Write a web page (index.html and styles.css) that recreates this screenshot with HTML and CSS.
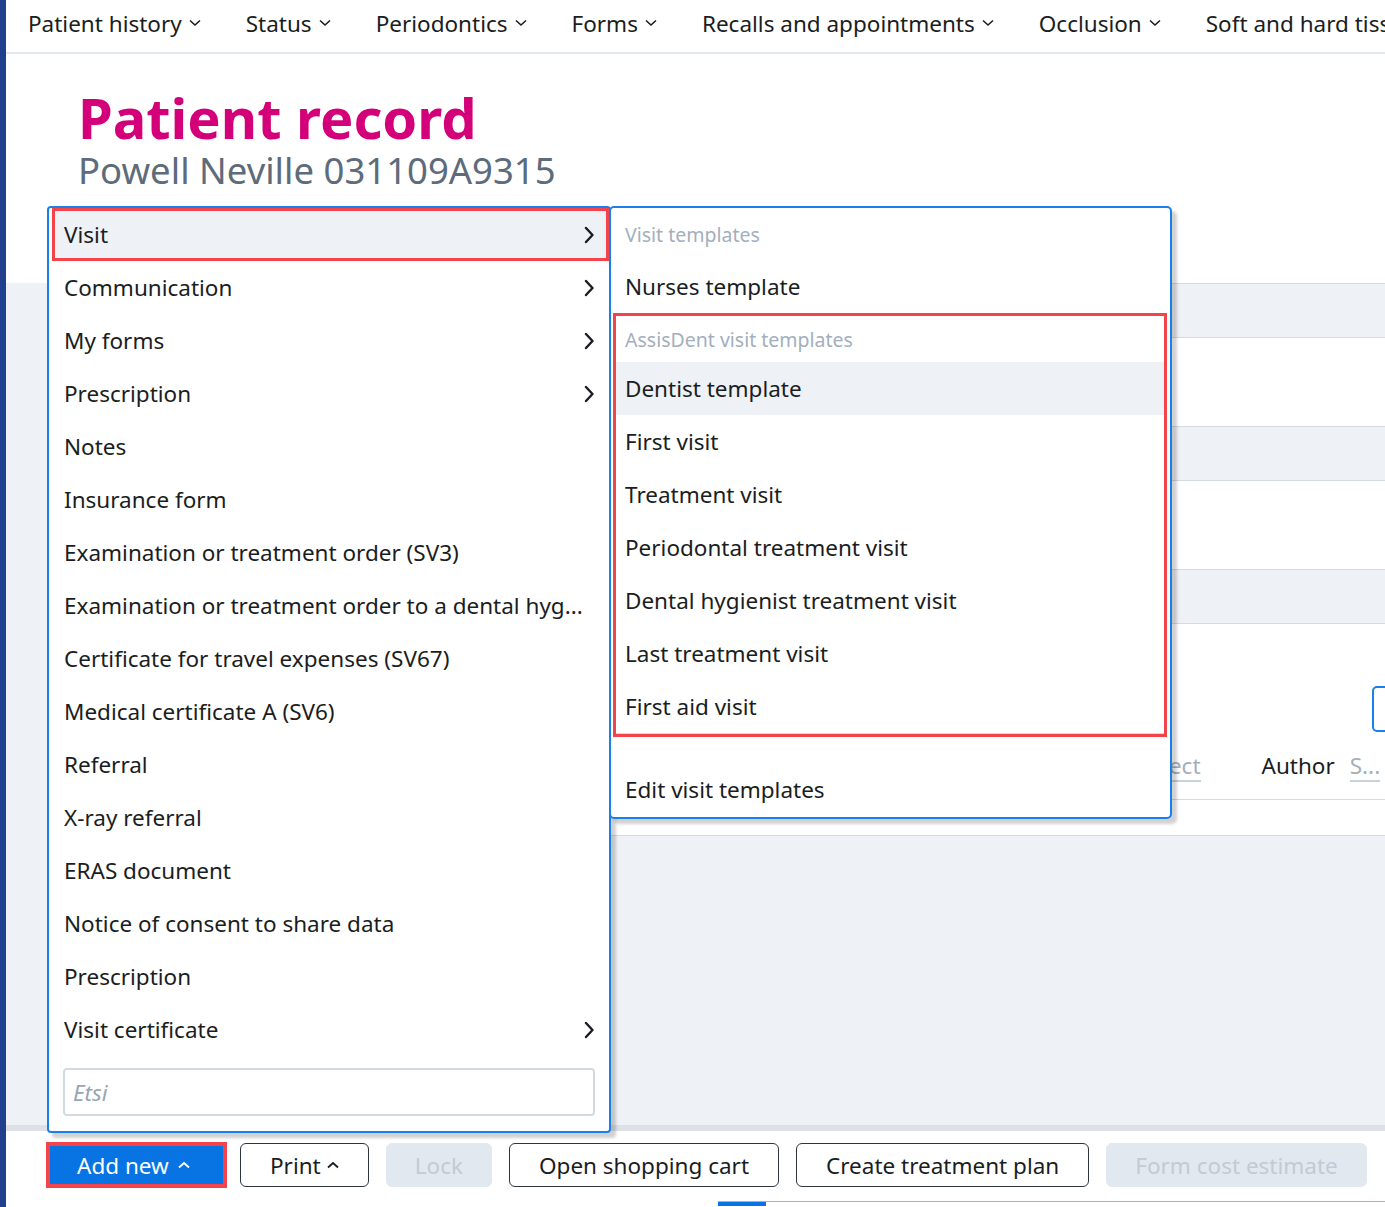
FILE: index.html
```html
<!DOCTYPE html>
<html lang="en">

<head>
    <meta charset="UTF-8">
    <title>Patient record</title>
    <link rel="stylesheet" href="styles.css">
</head>

<body>
    <div class="app">
        <div class="strip"></div>
        <div class="main">
            <nav class="topnav">
                <span class="nav-item">Patient history <svg class="chev" viewBox="0 0 12 8"><polyline points="1,1.5 6,6 11,1.5"/></svg></span>
                <span class="nav-item">Status <svg class="chev" viewBox="0 0 12 8"><polyline points="1,1.5 6,6 11,1.5"/></svg></span>
                <span class="nav-item">Periodontics <svg class="chev" viewBox="0 0 12 8"><polyline points="1,1.5 6,6 11,1.5"/></svg></span>
                <span class="nav-item">Forms <svg class="chev" viewBox="0 0 12 8"><polyline points="1,1.5 6,6 11,1.5"/></svg></span>
                <span class="nav-item">Recalls and appointments <svg class="chev" viewBox="0 0 12 8"><polyline points="1,1.5 6,6 11,1.5"/></svg></span>
                <span class="nav-item">Occlusion <svg class="chev" viewBox="0 0 12 8"><polyline points="1,1.5 6,6 11,1.5"/></svg></span>
                <span class="nav-item">Soft and hard tissues <svg class="chev" viewBox="0 0 12 8"><polyline points="1,1.5 6,6 11,1.5"/></svg></span>
            </nav>

            <header class="header">
                <h1 class="title">Patient record</h1>
                <p class="subtitle">Powell Neville 031109A9315</p>
            </header>

            <section class="panel">
                <div class="card">
                    <div class="row shade r1"></div>
                    <div class="row r2"></div>
                    <div class="row shade r3"></div>
                    <div class="row r4"></div>
                    <div class="row shade r5"></div>
                    <div class="row toolbar">
                        <div class="tool-btn"></div>
                        <div class="filters">
                            <span class="filter-link">Subject</span>
                            <span class="filter-label">Author</span>
                            <span class="filter-link">S...</span>
                        </div>
                    </div>
                    <div class="row r7"></div>
                </div>
            </section>

            <footer class="footer">
                <div class="actions">
                    <span class="marked-btn"><button class="btn primary">Add new <svg class="caret" viewBox="0 0 12 8"><polyline points="1,6.5 6,2 11,6.5"/></svg></button></span>
                    <button class="btn outline">Print <svg class="caret" viewBox="0 0 12 8"><polyline points="1,6.5 6,2 11,6.5"/></svg></button>
                    <button class="btn disabled">Lock</button>
                    <button class="btn outline">Open shopping cart</button>
                    <button class="btn outline">Create treatment plan</button>
                    <button class="btn disabled">Form cost estimate</button>
                </div>
                <div class="scrollbar"><span class="thumb"></span></div>
            </footer>

            <!-- dropdown opened from "Add new" -->
            <div class="menu main-menu">
                <div class="item marked active">Visit <svg class="arrow" viewBox="0 0 10 18"><polyline points="2,2 8.5,9 2,16"/></svg></div>
                <div class="item">Communication <svg class="arrow" viewBox="0 0 10 18"><polyline points="2,2 8.5,9 2,16"/></svg></div>
                <div class="item">My forms <svg class="arrow" viewBox="0 0 10 18"><polyline points="2,2 8.5,9 2,16"/></svg></div>
                <div class="item">Prescription <svg class="arrow" viewBox="0 0 10 18"><polyline points="2,2 8.5,9 2,16"/></svg></div>
                <div class="item">Notes</div>
                <div class="item">Insurance form</div>
                <div class="item">Examination or treatment order (SV3)</div>
                <div class="item"><span class="clip">Examination or treatment order to a dental hyg...</span></div>
                <div class="item">Certificate for travel expenses (SV67)</div>
                <div class="item">Medical certificate A (SV6)</div>
                <div class="item">Referral</div>
                <div class="item">X-ray referral</div>
                <div class="item">ERAS document</div>
                <div class="item">Notice of consent to share data</div>
                <div class="item">Prescription</div>
                <div class="item">Visit certificate <svg class="arrow" viewBox="0 0 10 18"><polyline points="2,2 8.5,9 2,16"/></svg></div>
                <div class="search-wrap">
                    <input class="search" type="text" placeholder="Etsi">
                </div>
            </div>

            <div class="menu sub-menu">
                <div class="item group-label first">Visit templates</div>
                <div class="item">Nurses template</div>
                <div class="group marked-group">
                    <div class="item group-label">AssisDent visit templates</div>
                    <div class="item active">Dentist template</div>
                    <div class="item">First visit</div>
                    <div class="item">Treatment visit</div>
                    <div class="item">Periodontal treatment visit</div>
                    <div class="item">Dental hygienist treatment visit</div>
                    <div class="item">Last treatment visit</div>
                    <div class="item">First aid visit</div>
                </div>
                <div class="item edit">Edit visit templates</div>
            </div>
        </div>
    </div>
</body>

</html>
```

FILE: styles.css
```css
* {
    box-sizing: border-box;
}

body {
    margin: 0;
    font-family: "Noto Sans", "Open Sans", sans-serif;
    color: #1a1d21;
    background: #fff;
}

.app {
    display: flex;
    width: 1385px;
    height: 1207px;
    overflow: hidden;
}

.strip {
    flex: none;
    width: 6px;
    background: #223f8d;
}

.main {
    flex: 1;
    min-width: 0;
    display: flex;
    flex-direction: column;
    position: relative;
}

/* top navigation */
.topnav {
    flex: none;
    height: 54px;
    display: flex;
    align-items: center;
    gap: 45px;
    padding: 0 0 6px 22px;
    border-bottom: 2px solid #e3e8ee;
    white-space: nowrap;
    overflow: hidden;
    font-size: 22.5px;
}

.nav-item {
    display: flex;
    align-items: center;
    gap: 7px;
}

.chev {
    width: 12px;
    height: 8px;
    fill: none;
    stroke: #1a1d21;
    stroke-width: 1.6;
}

/* header */
.header {
    flex: none;
    height: 229px;
    padding: 32px 0 0 72px;
}

.title {
    margin: 0;
    font-size: 56px;
    line-height: 62px;
    font-weight: 700;
    color: #d4007a;
}

.subtitle {
    margin: 0;
    font-size: 36.5px;
    line-height: 44px;
    color: #5d6b7a;
}

/* background content */
.panel {
    flex: 1;
    background: #eef1f5;
    padding-left: 42px;
}

.card {
    background: #fff;
}

.row {
    height: 88px;
}

.row.shade {
    height: 55px;
    background: #eef1f5;
    border-top: 1px solid #d5dae0;
    border-bottom: 1px solid #d5dae0;
}

.r1 {
    height: 54px;
    border-top: none;
}

.toolbar {
    height: 176px;
    padding-top: 62px;
    border-bottom: 1px solid #d5dae0;
}

.tool-btn {
    margin-left: 1324px;
    width: 60px;
    height: 46px;
    border: 2px solid #1a7fe8;
    border-radius: 5px;
}

.filters {
    display: flex;
    margin: 20px 0 0 1075px;
    font-size: 22.5px;
    white-space: nowrap;
}

.filter-link {
    color: #a3afbd;
    border-bottom: 2px solid #c9d1da;
    line-height: 28px;
}

.filter-label {
    line-height: 28px;
    margin: 0 15px 0 61px;
}

.r7 {
    height: 36px;
    border-bottom: 1px solid #d5dae0;
}

/* footer bar */
.footer {
    flex: none;
    height: 82px;
    border-top: 6px solid #dde1e6;
    background: #fff;
}

.actions {
    display: flex;
    align-items: center;
    gap: 17px;
    padding: 10px 0 0 40px;
    height: 58px;
}

.btn {
    height: 44px;
    padding: 0 29px;
    font-family: inherit;
    font-size: 22.5px;
    border-radius: 6px;
    display: flex;
    align-items: center;
    gap: 6px;
    white-space: nowrap;
}

.marked-btn {
    display: block;
    border: 4px solid #f4434a;
    margin-right: -4px;
}

.btn.primary {
    height: 38px;
    width: 173px;
    padding: 0 0 0 27px;
    gap: 9px;
    border: none;
    border-radius: 0;
    background: #0874e4;
    color: #fff;
}

.btn.outline {
    background: #fff;
    border: 1.5px solid #2d3540;
    color: #1a1d21;
}

.btn.disabled {
    padding: 0 28px;
    background: #e2e8ef;
    border: 1.5px solid #e2e8ef;
    color: #c2cad5;
}

.caret {
    width: 12px;
    height: 8px;
    fill: none;
    stroke: currentColor;
    stroke-width: 1.8;
}

.scrollbar {
    margin: 12px 0 0 712px;
    height: 5px;
    border-top: 1px solid #a9b0b8;
}

.thumb {
    display: block;
    width: 48px;
    height: 4px;
    background: #0874e4;
}

/* dropdown menus */
.menu {
    position: absolute;
    background: #fff;
    border: 2px solid #1a7fe8;
    border-radius: 4px;
    box-shadow: 5px 5px 3px rgba(0, 0, 0, 0.18);
    font-size: 22.5px;
}

.main-menu {
    left: 41px;
    top: 206px;
    width: 564px;
    height: 927px;
}

.item {
    height: 53px;
    display: flex;
    align-items: center;
    justify-content: space-between;
    padding: 0 15px;
    white-space: nowrap;
}

.item.active {
    background: #eef1f5;
}

.item.marked {
    margin: 0 0 0 3px;
    padding-left: 12px;
    outline: 3.5px solid #f4434a;
    outline-offset: -3px;
}

.arrow {
    width: 10px;
    height: 18px;
    fill: none;
    stroke: #1a1d21;
    stroke-width: 2.4;
    stroke-linecap: round;
    stroke-linejoin: round;
}

.clip {
    display: block;
}

.search-wrap {
    padding: 12px 14px 0;
}

.search {
    width: 100%;
    height: 48px;
    border: 2px solid #d2d9e1;
    border-radius: 4px;
    padding: 0 8px;
    font-family: inherit;
    font-size: 22.5px;
}

.search::placeholder {
    color: #98a5b3;
    font-style: italic;
}

.sub-menu {
    left: 603px;
    top: 206px;
    width: 563px;
    height: 613px;
    border-radius: 5px;
}

.sub-menu .item {
    padding: 0 14px;
}

.group-label {
    color: #a3afbd;
    font-size: 19.5px;
}

.sub-menu .group-label {
    height: 46px;
}

.sub-menu .group-label.first {
    height: 52px;
}

.marked-group {
    margin: 0 3px 0 2px;
    border: 3.5px solid #f4434a;
}

.marked-group .item {
    padding-left: 9px;
}

.marked-group .item:last-child {
    height: 54px;
    border-bottom: 1px solid #d5dae0;
}

.item.edit {
    margin-top: 26px;
    height: 52px;
}
```
